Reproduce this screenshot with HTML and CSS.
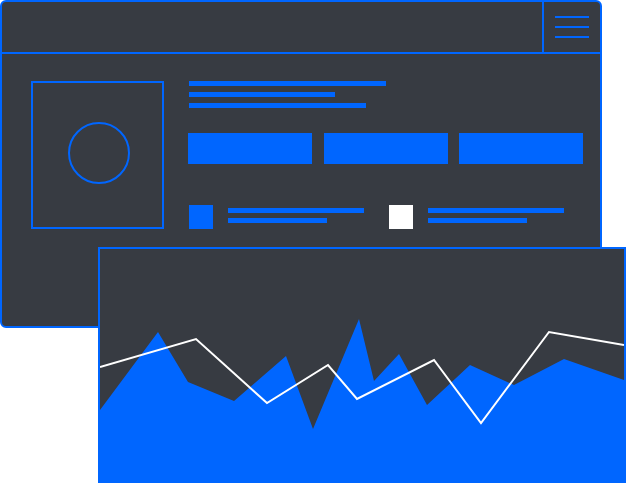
FILE: index.html
```html
<!DOCTYPE html>
<html>
<head>
<meta charset="utf-8">
<link rel="stylesheet" href="styles.css">
</head>
<body>
<div class="scene">
  <div class="window">
    <div class="win-header">
      <div class="menu-cell">
        <span class="bar"></span>
        <span class="bar"></span>
        <span class="bar"></span>
      </div>
    </div>
    <div class="win-body">
      <div class="avatar-box">
        <div class="avatar-circle"></div>
      </div>
      <div class="content">
        <div class="lines">
          <span class="line l1"></span>
          <span class="line l2"></span>
          <span class="line l3"></span>
        </div>
        <div class="buttons">
          <span class="btn"></span>
          <span class="btn"></span>
          <span class="btn"></span>
        </div>
        <div class="items">
          <div class="item">
            <span class="sq blue"></span>
            <div class="item-lines">
              <span class="iline long"></span>
              <span class="iline short"></span>
            </div>
          </div>
          <div class="item">
            <span class="sq white"></span>
            <div class="item-lines">
              <span class="iline long"></span>
              <span class="iline short"></span>
            </div>
          </div>
        </div>
      </div>
    </div>
  </div>
  <div class="chart-panel">
    <svg class="chart" width="524" height="240" viewBox="0 0 524 240">
      <polygon fill="#0066ff" points="0,161 58,83 88,133 134,152 186,107 213,180 259,70 274,132 299,105 327,156 370,116 414,136 464,110 524,131 524,240 0,240"/>
      <polyline fill="none" stroke="#ffffff" stroke-width="2" stroke-linejoin="miter" points="0,118 96,90 167,154 228,116 257,150 334,111 381,174 449,83 524,96"/>
    </svg>
  </div>
</div>
</body>
</html>
```

FILE: styles.css
```css
html, body {
  margin: 0;
  padding: 0;
  background: #ffffff;
  overflow: hidden;
}
.scene {
  position: relative;
  width: 626px;
  height: 483px;
}
.window {
  box-sizing: border-box;
  width: 602px;
  height: 328px;
  border: 2px solid #0066ff;
  border-radius: 6px;
  background: #373b42;
  display: flex;
  flex-direction: column;
}
.win-header {
  height: 50px;
  border-bottom: 2px solid #0066ff;
  display: flex;
  justify-content: flex-end;
}
.menu-cell {
  width: 56px;
  border-left: 2px solid #0066ff;
  display: flex;
  flex-direction: column;
  justify-content: center;
  align-items: center;
  gap: 8px;
}
.bar {
  display: block;
  width: 34px;
  height: 2px;
  background: #0066ff;
}
.win-body {
  display: flex;
  padding: 27px 0 0 29px;
  gap: 24px;
}
.avatar-box {
  box-sizing: border-box;
  width: 133px;
  height: 148px;
  border: 2px solid #0066ff;
  display: flex;
  align-items: center;
  justify-content: center;
  padding: 0 0 5px 2px;
}
.avatar-circle {
  box-sizing: border-box;
  width: 62px;
  height: 62px;
  border: 2px solid #0066ff;
  border-radius: 50%;
}
.content {
  display: flex;
  flex-direction: column;
}
.lines {
  display: flex;
  flex-direction: column;
  gap: 6px;
  padding-left: 1px;
}
.line {
  display: block;
  height: 5px;
  background: #0066ff;
}
.l1 { width: 197px; }
.l2 { width: 146px; }
.l3 { width: 177px; }
.buttons {
  display: flex;
  gap: 12px;
  margin-top: 25px;
}
.btn {
  display: block;
  width: 124px;
  height: 31px;
  background: #0066ff;
}
.buttons .btn:last-child { margin-left: -1px; }
.items {
  display: flex;
  margin-top: 41px;
  padding-left: 1px;
}
.item {
  display: flex;
  width: 200px;
  gap: 15px;
}
.sq {
  display: block;
  width: 24px;
  height: 24px;
}
.sq.blue { background: #0066ff; }
.sq.white { background: #ffffff; }
.item-lines {
  display: flex;
  flex-direction: column;
  gap: 5px;
  padding-top: 3px;
}
.iline {
  display: block;
  height: 5px;
  background: #0066ff;
}
.iline.long { width: 136px; }
.iline.short { width: 99px; }
.chart-panel {
  position: absolute;
  left: 98px;
  top: 247px;
  width: 524px;
  height: 240px;
  border: 2px solid #0066ff;
  background: #373b42;
}
.chart {
  display: block;
}
```
